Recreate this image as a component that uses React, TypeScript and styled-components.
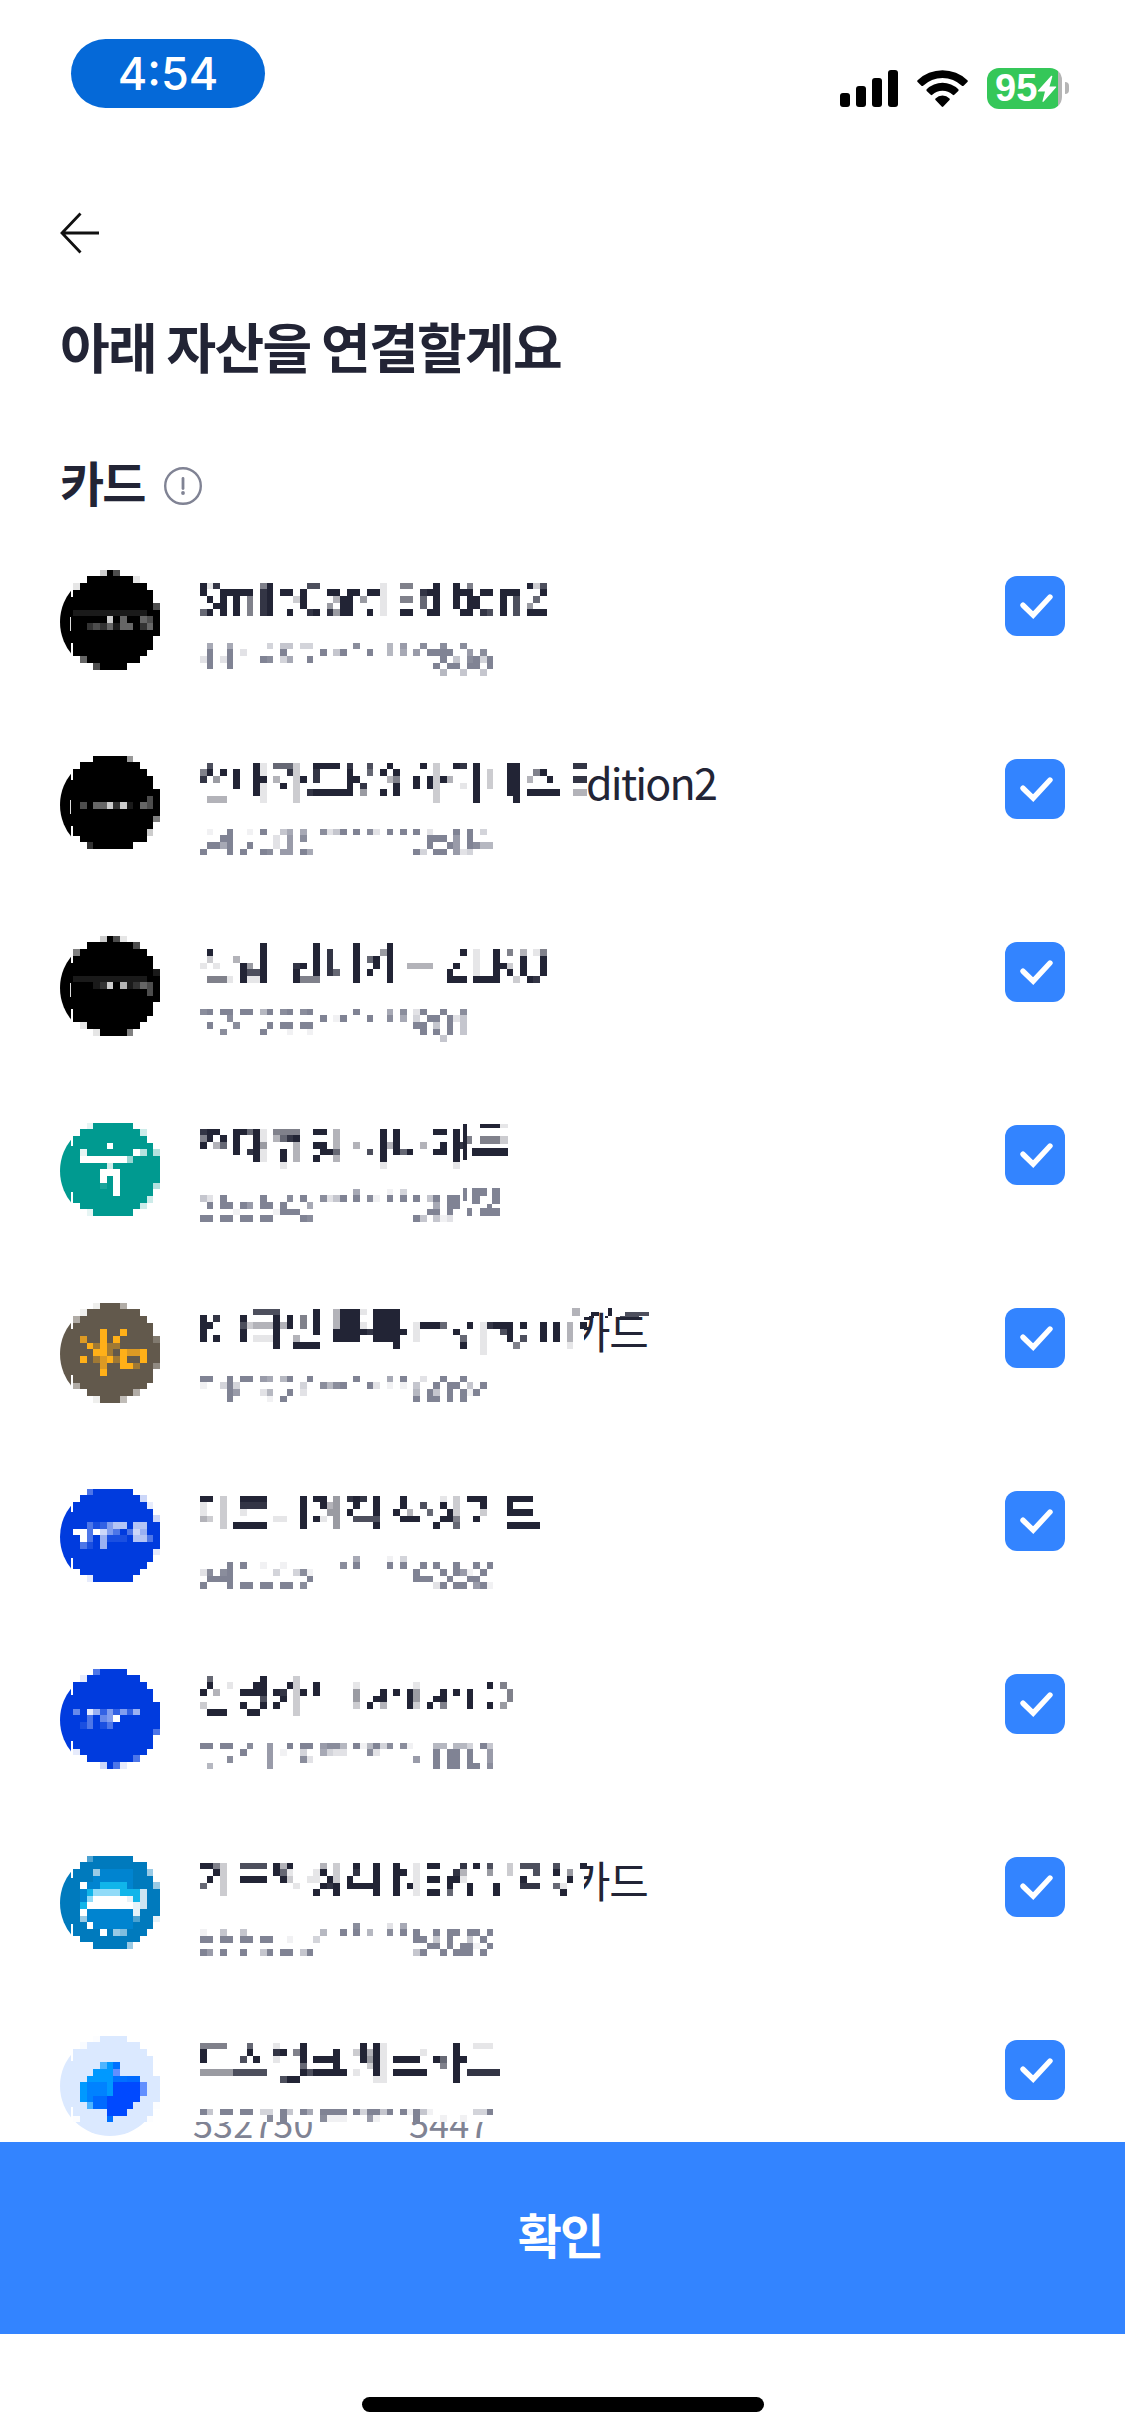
import React from 'react';
import styled, { createGlobalStyle } from 'styled-components';

const sans = "'Noto Sans CJK KR', 'Noto Sans', sans-serif";
const INK = '#222435';
const MUTED = '#808394';
const BLUE = '#3384ff';
const CELL = 20 / 3;

const Global = createGlobalStyle`
  * { box-sizing: border-box; }
  body { margin: 0; background: #fff; }
`;

const Screen = styled.div`
  display: flex;
  flex-direction: column;
  width: 1125px;
  height: 2436px;
  overflow: hidden;
  background: #fff;
  color: ${INK};
  font-family: ${sans};
`;

const StatusBar = styled.header`
  display: flex;
  justify-content: space-between;
  align-items: flex-start;
  flex: none;
  height: 193px;
  padding: 39px 56px 0 71px;
`;

const TimePill = styled.div`
  width: 194px;
  height: 69px;
  border-radius: 35px;
  background: #0569d8;
  color: #fff;
  font: 450 45px/69px Inter, sans-serif;
  letter-spacing: 0;
  text-align: center;
`;

const StatusIcons = styled.div`
  display: flex;
  padding-top: 29px;
`;

const Signal = styled.svg`
  width: 58px;
  height: 41px;
  margin-right: 19px;
`;

const Wifi = styled.svg`
  width: 51px;
  height: 41px;
  margin-right: 19px;
`;

const Battery = styled.div`
  display: flex;
  align-items: center;
  width: 75px;
  height: 41px;
  border-radius: 12px;
  background: linear-gradient(90deg, #35c759 71px, #b5b5b5 71px);
  padding-left: 8px;
  color: #fff;
  font: 700 38px/41px 'Liberation Sans', sans-serif;
`;

const Bolt = styled.svg`
  flex: none;
  width: 20px;
  height: 28px;
`;

const BatteryCap = styled.div`
  width: 4px;
  height: 12px;
  margin: 14px 0 0 3px;
  border-radius: 0 4px 4px 0;
  background: #b5b5b5;
`;

const NavBar = styled.nav`
  flex: none;
  height: 111px;
  padding: 18px 58px 0;
`;

const BackButton = styled.button`
  display: block;
  padding: 0;
  border: 0;
  background: none;
  svg { display: block; }
`;

const Title = styled.h1`
  flex: none;
  height: 139px;
  margin: 0;
  padding-left: 60px;
  font-size: 54px;
  line-height: 84px;
  font-weight: 700;
  letter-spacing: -1.7px;
`;

const SectionHead = styled.div`
  display: flex;
  flex: none;
  height: 117px;
  padding: 0 60px;
`;

const SectionTitle = styled.h2`
  margin: 0;
  font-size: 48px;
  line-height: 76px;
  font-weight: 700;
  letter-spacing: -1.8px;
`;

const InfoIcon = styled.svg`
  width: 40px;
  height: 40px;
  margin: 23px 0 0 18px;
`;

const List = styled.ul`
  flex: none;
  height: 1582px;
  margin: 0;
  padding: 0;
  overflow: hidden;
  list-style: none;
`;

const Item = styled.li`
  display: flex;
  height: 183px;
  padding: 0 60px;
`;

const Logo = styled.svg`
  flex: none;
  width: 100px;
  height: 120px;
  margin-right: 40px;
`;

const Info = styled.div`
  flex: 1;
  min-width: 0;
`;

const NameLine = styled.div`
  display: flex;
  height: 70px;
`;

const NumberLine = styled.div`
  position: relative;
  height: 60px;
`;

const Mosaic = styled.svg<{ $cols: number; $height?: number }>`
  position: relative;
  z-index: 1;
  display: block;
  flex: none;
  width: ${p => Math.round(p.$cols * CELL)}px;
  height: ${p => p.$height || 70}px;
  overflow: visible;
  background: #fff;
  box-shadow: -8px 0 #fff;
`;

const NameTail = styled.span<{ $shift: number; $top: number; $spacing: number }>`
  margin: ${p => p.$top}px 0 0 ${p => p.$shift}px;
  font-size: 43px;
  line-height: 64px;
  font-weight: 400;
  letter-spacing: ${p => p.$spacing}px;
  white-space: nowrap;
`;

const NumberTail = styled.span`
  position: absolute;
  left: -7px;
  top: 4px;
  color: ${MUTED};
  font-size: 36px;
  line-height: 48px;
  font-weight: 400;
  letter-spacing: 0.1px;
  white-space: nowrap;
`;

const Stars = styled.span`
  letter-spacing: -0.9px;
`;

const CheckBox = styled.div`
  flex: none;
  width: 60px;
  height: 60px;
  margin-top: 16px;
  border-radius: 12px;
  background: ${BLUE};
  svg { display: block; }
`;

const Confirm = styled.button`
  flex: none;
  height: 192px;
  padding: 0 5px 11px 0;
  border: 0;
  background: ${BLUE};
  color: #fff;
  font: 700 48px/72px ${sans};
  letter-spacing: -1.8px;
`;

const HomeArea = styled.footer`
  display: flex;
  justify-content: center;
  padding-top: 63px;
`;

const HomeBar = styled.div`
  width: 402px;
  height: 15px;
  border-radius: 8px;
  background: #000;
`;

type Patch = [number, number, number, number, number];

// Each row lists "column:shades"; a shade is the tenth of full strength.
type Cells = { top: number; rows: string; patches?: Patch[] };

type Card = {
  name: Cells;
  number: Cells;
  nameCols?: number;
  tail?: string;
  tailShift?: number;
  tailTop?: number;
  tailSpacing?: number;
  numberTail?: [string, string, string];
  logo: { color: string; top: number; rows: string; notch?: boolean; open?: boolean; palette?: Record<string, string> };
};

const DARK_A = `....8#3......
..#######9...
9##########..
############.
############.
############3
11111111111##
#####8#4##43#
##2324144#24#
#############
############.
############.
###########..
.4########...
...3####.....`;

const DARK_B = `...#####6....
.#########...
###########..
############.
############.
#############
###########3#
#3#448281#43#
#############
############5
############.
###########8.
.##########..
..2######....`;

const DARK_C = `....8#39.....
..#######3...
5##########..
############.
############.
############1
11111111111##
###128#71243#
###########3#
#############
############.
############.
###########..
.9########...
...9####5....`;

const cards: Card[] = [
  {
    logo: { color: '#000', top: 10, rows: DARK_A, notch: true },
    name: {
      top: 23,
      rows: '0:918 9:59 16:77 27:1 30:55 35:9 38:9.5 49:927/0:9 3:99999 9:89 12:99 15:9 19:99 22:99 25:991 33:899 38:999 42:99 45:999 51:9/1:9 3:9 5:9 7:5 9:89 14:29 20:399 24:4 27:1 30:55 33:6 35:9 38:9.9 41:9 45:9 47:7 50:6/2:99 5:9 7:5 9:89 15:9 19:4 21:99 27:1 33:6 35:9 38:9.9 41:9 45:9 47:7 49:4/0:69 3:9 5:9 7:5 9:89 13:9 16:89 19:8499 25:9 27:1 30:99 34:99 39:99 42:87 45:9 47:7 49:999',
    },
    number: {
      top: 13,
      rows: '1:6 4:6 10:3 12:44 15:33 23:8 28:5 30:7 33:8 36:8 39:8/1:9 4:9 6:2 12:9 18:9.49 25:9 28:5 30:6 32:7 34:9999 40:7 42:8/0:29 3:29 9:98 12:36 16:9 36:9.4.8939/1:9 4:9 35:9.99.99.9/36:5 39:4 42:4',
    },
  },
  {
    logo: { color: '#000', top: 13, rows: DARK_B, notch: true },
    nameCols: 57.75,
    tail: 'dition2',
    tailShift: 1,
    tailTop: 6,
    tailSpacing: -1.8,
    name: {
      top: 20,
      rows: '1:7 8:91 11:6662 17:9999 22:8 25:7 28:9 33:9 35:2 38:98 41:9 46:99 56:88/0:59.9.9 8:91 13:82 17:8 22:9 25:6 27:9.9 35:2 41:9 43:2 46:99 50:59/0:8.4 5:9 8:99 11:3 14:29 17:8 22:99 28:35 32:9 34:9293 41:9 43:2 46:99 49:3 52:9 56:88/5:9 8:91 12:9 14:2 22:9.8 29:9 32:9 34:92 39:1 41:9 43:2 46:99/8:91 14:2 16:8999999 24:4 27:9.9 35:2 41:9 46:99 49:99999 56:33/1:333 9:1 14:2 35:2 41:9 47:9',
    },
    number: {
      top: 16,
      rows: '1:1 4:9 7:1 9:9 12:46 15:6 18:8249 23:9 25:82 28:9 30:9 32:9 34:2 38:9 40:9 42:3/3:99 11:2 13:7 15:8 34:999 38:7 40:9/1:9969 7:9 11:2 13:7 34:9 37:97.9855/0:9 4:9 6:9 9:98 12:77 15:96 32:93 35:99 38:723',
    },
  },
  {
    logo: { color: '#000', top: 10, rows: DARK_C, notch: true },
    name: {
      top: 17,
      rows: '9:9 17:9 23:9 28:9/1:9 9:9 17:9 19:8 23:9 27:49 39:9 41:1 44:9 46:5 48:3 50:15/1:2 5:3 9:9 17:9 19:8 23:9 25:69.9 41:1 44:9 48:9 51:9/0:1.1 6:94.9 14:89.9 19:8 23:9 26:9.9 31:3333 38:9 41:1 44:99 46:2 48:9 51:9/6:9779 14:9 17:9 19:86 23:9 25:9 28:9 37:9 41:1 44:9 46:9 48:9 51:9/1:5551 6:9119 14:9555 23:9 28:9 37:999 41:9999 47:2 49:98',
    },
    number: {
      top: 13,
      rows: '0:89 3:99 6:99 9:59 12:89 15:89 23:9 28:6 30:8 32:29 36:9 39:8/4:8 18:9.19 25:9 28:8 30:6 32:3.99.924/1:9 5:8 10:9 12:99 15:99 32:99.4.9.4/3:8 9:9 13:1 16:1 33:9.9.9.4/36:4',
    },
  },
  {
    logo: {
      color: '#009a90',
      top: 14,
      rows: `..9######....
.#########8..
###########..
#####W######.
#9#######W7#7
#WWWWWWW6####
#####8#######
####WWW######
####W#W######
####1#W#####7
######W#####.
###########8.
.#########8..
..9######....`,
    },
    name: {
      top: 20,
      rows: '0:899 5:99691 11:5555 17:99 20:3 27:9 29:9 35:99 38:9/0:59.9 5:9 8:91 11:3689 20:3 27:9 29:9 38:9/0:9.36 5:9 8:94 14:3 17:99 20:3 23:3 27:939 33:3 36:9 38:98/5:9.891 12:9.3 18:996 25:7 27:9.969 35:99 38:9/8:91 12:9.3 17:9 20:3 27:9 38:9/12:1 27:1 38:1',
      patches: [[39.5, -0.75, 0.6, 5.4, 9], [40.1, 1.05, 0.7, 1.2, 5], [42, -0.75, 3, 0.6, 9], [45, -0.75, 1.2, 0.6, 1], [42, 1.05, 3, 1.2, 5], [45, 1.05, 1.2, 1.2, 2], [40.8, 2.85, 5.4, 1.2, 9]],
    },
    number: {
      top: 10,
      rows: '23:6 28:1 30:3/0:42 3:9 9:9 13:8 15:9 18:8249 23:9 25:81 28:9 30:9 32:9 34:49 37:99/1:9 3:99 6:97 9:99 12:9 16:6 35:6 37:99/5:1 11:1999 34:99 37:9/0:99 3:99 6:99 9:99 15:98 32:94.412',
      patches: [[39.5, -0.15, 0.5, 2, 9], [40.8, -0.15, 1.2, 2.4, 9], [42, -0.15, 1.1, 1.2, 9], [43.8, -0.15, 1.2, 2.4, 9], [43.1, 2.2, 0.7, 0.6, 9], [40.1, 2.85, 0.7, 1.2, 9], [42, 2.85, 3, 1.2, 9]],
    },
  },
  {
    logo: {
      color: '#62594c',
      top: 11,
      palette: { O: '#ffb018', P: '#dc9a24', q: '#a07934' },
      rows: `...9###5.....
.9########...
5##########..
############.
####O##O####.
#P##O#O#####2
##OqOqq######
###OOq#OPPO##
#O#qPOqO##O##
####P##OOq##3
####O#######.
############.
5##########..
..#######5...
...9###6.....`,
    },
    nameCols: 57.6,
    tail: '카드',
    tailShift: -13,
    tailTop: 6,
    tailSpacing: -1.2,
    name: {
      top: 17,
      rows: '8:7777 17:9 20:39991 26:9999/0:9.8 6:9 11:9.9.5.9 20:3999 26:9999/0:99 6:723339 12:39.5.9 20:39991.9999 32:19996 40:9 42:1899 46:9.9 51:9.9.3.9/0:9 6:9 11:9 17:9 20:99999899999 32:1 38:9 42:1 45:79 51:9.9.3/0:9.9 6:9.111 11:9 14:3 20:9999 26:9999 32:1 39:6 42:1 46:9.7 51:9.9.3/11:9 14:9999 29:9 39:9 42:1 47:5 55:1/42:1',
      patches: [[55.8, -0.15, 1.2, 1.2, 3], [58.7, 0.45, 1.2, 0.6, 9], [58.3, 1.05, 0.8, 0.3, 9], [61.2, -0.15, 0.6, 1.2, 9], [60.7, 1.05, 0.5, 0.3, 9], [63.7, 0.45, 3.6, 0.6, 7], [63, 1.05, 2.8, 0.3, 7]],
    },
    number: {
      top: 14,
      rows: '0:99 4:9 6:99 9:76 12:59 16:9 23:9 28:6 30:9 33:2 36:9 39:9/0:1 3:393 15:3 18:8589 25:92 28:1 30:1 32:4 35:9.99.4.9/4:97 9:25 13:9.2 32:5.94.9.919/4:9 10:1.9 32:9.99.9.9',
    },
  },
  {
    logo: {
      color: '#003bde',
      top: 14,
      rows: `..3######....
.#########8..
###########9.
############.
############8
##312577#77##
WW3W853#386##
#W3#6111#773#
#31#6########
############9
############.
###########..
.#########...
..9######....`,
    },
    name: {
      top: 21,
      rows: '0:99 3:2 6:9999 15:9.99.4.898.9 30:9 36:1.2.999 46:9999/0:1 3:2 6:8888 15:9 18:934 23:9 26:9 30:9 33:7 36:9.2 42:9 46:9/0:1 3:2 6:1 15:9 19:44.9 26:9 29:9.3 34:6 37:92 42:2 46:9999/0:32.2 11:11 15:9.91.4 23:7777 30:999 36:995 41:9/3:2 5:99999 15:9 20:4 26:9 35:9 38:6 46:99999',
    },
    number: {
      top: 11,
      rows: '23:6 28:1 30:3/4:9 6:9 9:1 12:1 21:8.9 28:9 30:9 33:9 35:9 38:9 41:9.9/0:28.89 11:3 14:381 32:9 36:9.971.9/1:9999 16:9 32:999 37:9 40:99/0:9 4:9 6:99 9:99 12:99 15:8 35:29.99.791',
    },
  },
  {
    logo: {
      color: '#003bde',
      top: 11,
      rows: `...3####.....
.9########...
###########..
############.
############.
#############
4#96252526###
##3#45W######
#13#13#######
############3
############.
############.
9##########..
..#######3...
....8#39.....`,
    },
    name: {
      top: 18,
      rows: '1:6 9:9 14:2/1:9 4:1 8:99 13:92 17:9 23:1 32:1 43:9.5/0:9.3 6:9999 11:98.29.9 23:4 27:9.9.94 36:9.9.9 46:5/9:7 12:9.2 23:4 26:99 31:94 35:99 40:9 46:5/0:2 6:9 9:9.9 14:2 23:2.9.3 31:92.9.5 40:9 43:9.4/1:999 7:99 14:2',
    },
    number: {
      top: 15,
      rows: '0:99 3:99 7:8 10:7 13:9 15:99 18:7885 23:915938 30:81 35:55.553.94/6:9 10:7 12:1 15:3 18:6322 25:82 35:9.99.9..7/4:8 10:7 15:82 32:7 35:9.99.9..7/1:5 10:7 35:9.99.99.8',
    },
  },
  {
    logo: {
      color: '#007abd',
      top: 15,
      palette: { b: '#0084d0', c: '#10b5ea', l: '#91dbf8' },
      rows: `..3######....
.##########..
###6bbbbb##6.
###bbbbbb###.
#Wbbccccb###6
#bcllllccc8##
#blWWWWW9c8##
#cWWWWWWW98##
#Wbbbbbbb9###
#6bbbbbbb3##9
##Wbbbbbb###.
####W#65###..
.#########...
...#####6....`,
    },
    nameCols: 57.6,
    tail: '카드',
    tailShift: -13,
    tailTop: 6,
    tailSpacing: -1.2,
    name: {
      top: 22,
      rows: '0:9952 6:7777 11:939 18:3.2 23:9 26:9 29:9 32:1 34:99 39:8.9.7 46:2 48:777 53:7 57:9/2:92 11:961 17:19.2 23:8 26:9 29:99 32:1 38:83 43:4 46:2 50:7 53:9.4/1:9.2 6:9999 12:92 16:11.92.9 26:9 29:9 32:1 34:99 37:991 48:9 55:9/0:6 3:2 14:1 18:989 22:99999 29:9.91 37:9 40:9 44:9 48:888 53:61/3:2 17:9 20:9 26:9 29:9 32:1 34:99 37:6 40:9 44:9 54:9',
    },
    number: {
      top: 12,
      rows: '23:8 28:2 30:6/0:1 3:4 6:4 18:5 21:9.9.5 28:8 30:9 32:9 35:9.99.99.9/0:99 3:99 6:99 9:99 13:1 17:3 32:99.4.9..4.9/34:99 37:9 39:991.9/0:97 3:9 6:9 9:49 12:99 15:49 32:49 36:9.999.9',
    },
  },
  {
    logo: {
      color: '#dbe9ff',
      top: 12,
      open: true,
      palette: { a: '#0099ff', b: '#0082ff', c: '#006aff', d: '#0049ff', s: '#4db4ff', k: '#0070ff', m: '#628fff' },
      rows: `...9####.....
.8########...
###########..
############.
####sak#####.
###aaam#####.
##aaaakkcc###
#abbbaddddm##
#abbbaddddm##
#abccddddd###
##sccdddd###9
#####ddd####.
9####k#####9.`,
    },
    name: {
      top: 19,
      rows: '0:5555 7:6 11:1 15:9 24:9.91 38:9 41:111/0:9 7:9 11:89.59 20:9 23:29391 33:1 38:9/0:9 6:7.9 11:1 15:9 17:9999 24:9491 29:9999 35:96.99/15:6 20:9 25:291 36:5 38:9/0:4444477777 15:9799999 23:1 26:91 29:99999 38:9 40:88888/12:799 26:11 38:9',
    },
    number: {
      top: 15,
      rows: '0:94 3:99 6:99 9:33 12:94 15:96 18:9999 23:939949.91941 41:339/10:8 12:9 18:8111 25:71 32:9 36:1 39:1',
    },
    numberTail: ['532750', '******', '5447'],
  },
];

function CellRects({ data, color }: { data: Cells; color: string }) {
  const out: React.ReactElement[] = [];
  data.rows.split('/').forEach((row, r) => {
    const y = Math.floor(r * CELL);
    const h = Math.floor((r + 1) * CELL) - y;
    row.split(' ').forEach(run => {
      const [start, shades] = run.split(':');
      [...shades].forEach((s, i) => {
        if (s === '.') return;
        const c = Number(start) + i;
        const x = Math.round(c * CELL);
        const w = Math.round((c + 1) * CELL) - x;
        out.push(<rect key={`${r}-${c}`} x={x} y={y + data.top} width={w} height={h} fill={color} opacity={s === '9' ? 1 : Number(s) * 0.115} />);
      });
    });
  });
  (data.patches || []).forEach(([x, y, w, h, s], i) =>
    out.push(<rect key={`p${i}`} x={x * CELL} y={data.top + y * CELL} width={w * CELL} height={h * CELL} fill={color} opacity={s === 9 ? 1 : s * 0.115} />),
  );
  return <g shapeRendering="crispEdges">{out}</g>;
}

function LogoArt({ logo, id }: { logo: Card['logo']; id: string }) {
  const left = 13;
  return (
    <Logo viewBox="0 0 100 120" aria-hidden>
      <clipPath id={id}>
        <rect x="0" y="0" width="11" height="120" />
        {logo.open && <rect x="0" y="98" width="100" height="22" />}
      </clipPath>
      <circle cx="50" cy="62" r="50" fill={logo.color} clipPath={`url(#${id})`} />
      <g shapeRendering="crispEdges">
        <rect x="11" y="37" width="2" height="46" fill={logo.color} />
        {logo.notch && <rect x="10" y="57" width="1" height="14" fill="#ddd" />}
        {logo.rows.split('\n').map((row, r) => {
          const y = logo.top + Math.floor(r * CELL);
          const h = logo.top + Math.floor((r + 1) * CELL) - y;
          return [...row].map((ch, c) => {
            if (ch === '.') return null;
            const x = left + Math.round(c * CELL + 0.33);
            const w = left + Math.round((c + 1) * CELL + 0.33) - x;
            const tint = ch >= '1' && ch <= '9' ? Number(ch) / 10 : ch === 'W' ? 1 : 0;
            return (
              <React.Fragment key={c}>
                <rect x={x} y={y} width={w} height={h} fill={logo.palette?.[ch] || logo.color} />
                {tint > 0 && <rect x={x} y={y} width={w} height={h} fill="#fff" opacity={tint} />}
              </React.Fragment>
            );
          });
        })}
      </g>
    </Logo>
  );
}

function CardRow({ card, index }: { card: Card; index: number }) {
  return (
    <Item>
      <LogoArt logo={card.logo} id={`logo-edge-${index}`} />
      <Info>
        <NameLine>
          <Mosaic $cols={card.nameCols || 53} aria-hidden>
            <CellRects data={card.name} color={INK} />
          </Mosaic>
          {card.tail && (
            <NameTail $shift={card.tailShift || 0} $top={card.tailTop || 0} $spacing={card.tailSpacing || 0}>
              {card.tail}
            </NameTail>
          )}
        </NameLine>
        <NumberLine>
          <Mosaic $cols={46} $height={card.numberTail ? 28 : 52} aria-hidden>
            <CellRects data={card.number} color={MUTED} />
          </Mosaic>
          {card.numberTail && (
            <NumberTail>
              {card.numberTail[0]}
              <Stars>{card.numberTail[1]}</Stars>
              {card.numberTail[2]}
            </NumberTail>
          )}
        </NumberLine>
      </Info>
      <CheckBox>
        <svg width="60" height="60" viewBox="0 0 60 60" fill="none" stroke="#fff" strokeWidth="5.4" strokeLinecap="round">
          <path d="M18 29.2 28.2 39.2 45 21" />
        </svg>
      </CheckBox>
    </Item>
  );
}

export default function App() {
  return (
    <>
      <Global />
      <Screen>
        <StatusBar>
          <TimePill>4:54</TimePill>
          <StatusIcons>
            <Signal viewBox="0 0 58 41">
              <rect x="0" y="25" width="10" height="14" rx="3" />
              <rect x="16" y="18" width="10" height="21" rx="3" />
              <rect x="32" y="10" width="10" height="29" rx="3" />
              <rect x="48" y="2" width="10" height="37" rx="3" />
            </Signal>
            <Wifi viewBox="0 0 51 41">
              <path d="M.6 12.2a36 36 0 0 1 49.8 0c.6.6.6 1.2 0 1.8L46.6 17.7c-.6.5-1.1.5-1.7 0a28 28 0 0 0-38.8 0c-.6.5-1.1.5-1.7 0L.6 14c-.6-.6-.6-1.2 0-1.8Z" />
              <path d="M9.7 21.2a22.8 22.8 0 0 1 31.6 0c.5.5.5 1.1 0 1.7l-4 3.9c-.5.5-1.1.5-1.6 0a15.2 15.2 0 0 0-20.4 0c-.5.5-1.1.5-1.6 0l-4-3.9c-.5-.6-.5-1.2 0-1.7Z" />
              <path d="M18.5 30.4a10.2 10.2 0 0 1 14 0c.5.5.5 1 0 1.5l-6.2 6.6c-.5.6-1.1.6-1.6 0l-6.2-6.6c-.5-.5-.5-1 0-1.5Z" />
            </Wifi>
            <Battery>
              95
              <Bolt viewBox="0 0 20 28">
                <path d="M14 1 1 15.5c-.5.6-.2 1 .5 1H8L5.5 26c-.2.9.5 1.3 1.2.6L19 12.5c.5-.6.2-1.1-.5-1.1H12.5L15.3 1.8C15.5.9 14.7.3 14 1Z" fill="#fff" />
              </Bolt>
            </Battery>
            <BatteryCap />
          </StatusIcons>
        </StatusBar>
        <NavBar>
          <BackButton aria-label="뒤로">
            <svg width="44" height="44" viewBox="0 0 44 44" fill="none" stroke="#111" strokeWidth="2.8">
              <path d="M22.5 2.5 4 22l18.5 19.5M4 22h37" />
            </svg>
          </BackButton>
        </NavBar>
        <Title>아래 자산을 연결할게요</Title>
        <SectionHead>
          <SectionTitle>카드</SectionTitle>
          <InfoIcon viewBox="0 0 40 40" fill="none" stroke={MUTED} strokeWidth="2.4">
            <circle cx="20" cy="20" r="17.8" />
            <path d="M20 12.5v10" strokeLinecap="round" strokeWidth="2.8" />
            <circle cx="20" cy="27" r="1.9" fill={MUTED} stroke="none" />
          </InfoIcon>
        </SectionHead>
        <List>
          {cards.map((card, i) => (
            <CardRow key={i} card={card} index={i} />
          ))}
        </List>
        <Confirm>확인</Confirm>
        <HomeArea>
          <HomeBar />
        </HomeArea>
      </Screen>
    </>
  );
}
